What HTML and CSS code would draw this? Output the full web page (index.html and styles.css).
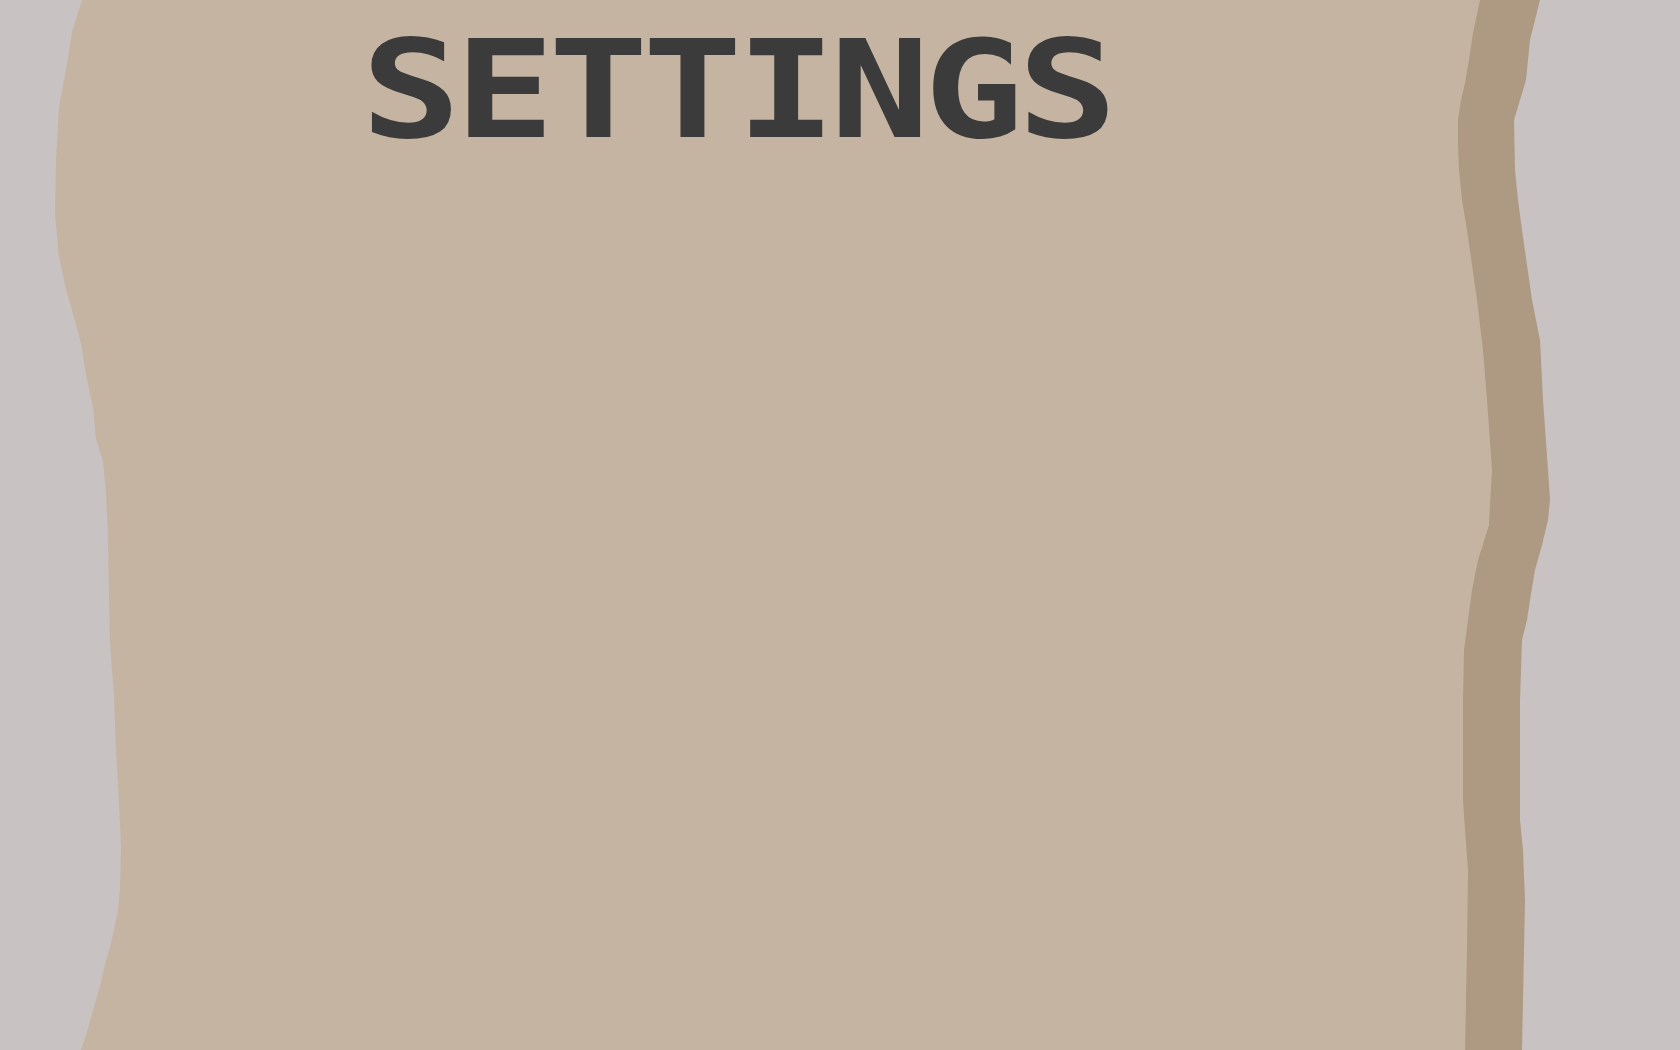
FILE: index.html
```html
<!DOCTYPE html>
<html lang="en">
<head>
<meta charset="utf-8">
<title>Settings</title>
<link rel="stylesheet" href="styles.css">
</head>
<body>
<main class="page">
  <svg class="paper" viewBox="0 0 1680 1050" preserveAspectRatio="none" aria-hidden="true">
    <polygon class="paper-shadow" points="1300,0 1540,0 1535,20 1530,40 1526,80 1520,100 1514,120 1515,170 1518,200 1522,230 1527,265 1532,300 1540,340 1543,400 1548,470 1550,500 1548,520 1542,545 1535,570 1530,600 1527,620 1522,640 1520,700 1520,820 1523,850 1525,900 1523,1000 1522,1050 1300,1050"/>
    <polygon class="paper-sheet" points="82,0 1480,0 1473,33 1469,60 1465,83 1461,100 1458,120 1458,145 1459,170 1462,200 1467,230 1472,265 1477,300 1483,350 1487,400 1492,470 1490,505 1489,525 1478,560 1472,590 1468,620 1464,650 1463,700 1463,800 1465,830 1468,870 1467,950 1465,1050 81,1050 88,1029 94,1007 100,986 105,964 111,943 118,911 120,889 121,846 118,782 116,750 114,696 110,643 109,600 108,536 106,493 103,461 96,439 93,407 86,375 81,343 75,321 66,289 59,257 55,214 56,161 59,107 67,64 72,32"/>
  </svg>
  <header class="title-bar">
    <h1 class="title">SETTINGS</h1>
  </header>
</main>
</body>
</html>
```

FILE: styles.css
```css
html, body {
  margin: 0;
  padding: 0;
  height: 100%;
}

body {
  background: #c8c2c2;
  font-family: "DejaVu Sans Mono", "Liberation Mono", monospace;
  overflow: hidden;
}

.page {
  position: relative;
  width: 1680px;
  height: 1050px;
}

.paper {
  position: absolute;
  inset: 0;
  width: 100%;
  height: 100%;
  display: block;
}

.paper-shadow {
  fill: #ae9983;
}

.paper-sheet {
  fill: #c6b4a2;
}

.title-bar {
  position: relative;
  z-index: 1;
  padding: 22px 0 0 361px;
}

.title {
  margin: 0;
  display: inline-block;
  font-family: "DejaVu Sans Mono", monospace;
  font-weight: bold;
  font-size: 136px;
  line-height: 1;
  letter-spacing: -5px;
  color: #3b3b3b;
  transform: scaleX(1.22);
  transform-origin: left top;
}
```
